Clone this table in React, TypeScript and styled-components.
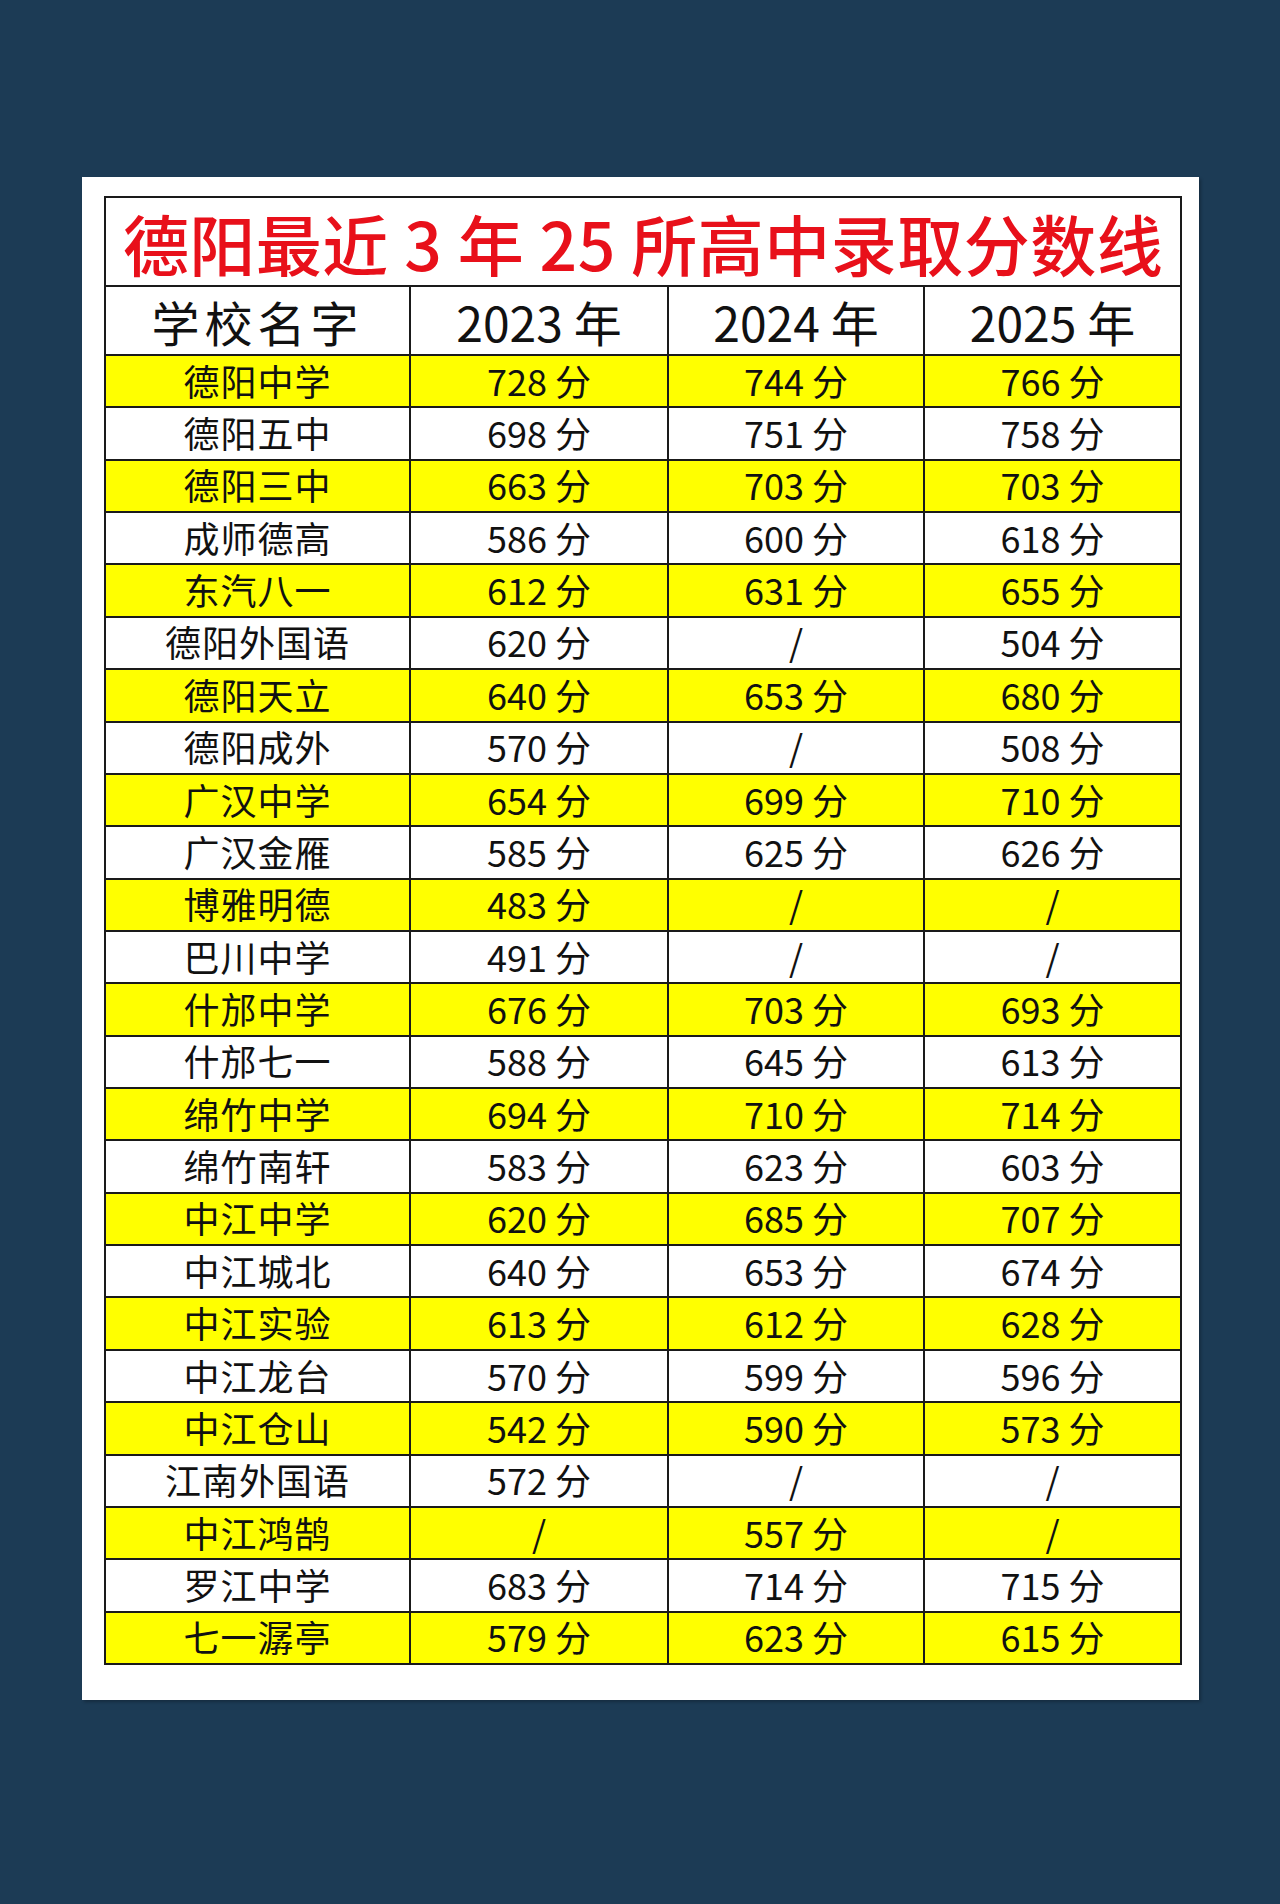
import React from 'react'
import styled, { createGlobalStyle } from 'styled-components'

const GlobalStyle = createGlobalStyle`
  html, body {
    margin: 0;
    padding: 0;
    background: #1c3b55;
  }
  body {
    font-family: "Noto Sans CJK SC", "Noto Sans", sans-serif;
  }
`

type Row = {name: string; y2023: string; y2024: string; y2025: string}

const rows: Row[] = [
  {name: '德阳中学', y2023: '728', y2024: '744', y2025: '766'},
  {name: '德阳五中', y2023: '698', y2024: '751', y2025: '758'},
  {name: '德阳三中', y2023: '663', y2024: '703', y2025: '703'},
  {name: '成师德高', y2023: '586', y2024: '600', y2025: '618'},
  {name: '东汽八一', y2023: '612', y2024: '631', y2025: '655'},
  {name: '德阳外国语', y2023: '620', y2024: '', y2025: '504'},
  {name: '德阳天立', y2023: '640', y2024: '653', y2025: '680'},
  {name: '德阳成外', y2023: '570', y2024: '', y2025: '508'},
  {name: '广汉中学', y2023: '654', y2024: '699', y2025: '710'},
  {name: '广汉金雁', y2023: '585', y2024: '625', y2025: '626'},
  {name: '博雅明德', y2023: '483', y2024: '', y2025: ''},
  {name: '巴川中学', y2023: '491', y2024: '', y2025: ''},
  {name: '什邡中学', y2023: '676', y2024: '703', y2025: '693'},
  {name: '什邡七一', y2023: '588', y2024: '645', y2025: '613'},
  {name: '绵竹中学', y2023: '694', y2024: '710', y2025: '714'},
  {name: '绵竹南轩', y2023: '583', y2024: '623', y2025: '603'},
  {name: '中江中学', y2023: '620', y2024: '685', y2025: '707'},
  {name: '中江城北', y2023: '640', y2024: '653', y2025: '674'},
  {name: '中江实验', y2023: '613', y2024: '612', y2025: '628'},
  {name: '中江龙台', y2023: '570', y2024: '599', y2025: '596'},
  {name: '中江仓山', y2023: '542', y2024: '590', y2025: '573'},
  {name: '江南外国语', y2023: '572', y2024: '', y2025: ''},
  {name: '中江鸿鹄', y2023: '', y2024: '557', y2025: ''},
  {name: '罗江中学', y2023: '683', y2024: '714', y2025: '715'},
  {name: '七一潺亭', y2023: '579', y2024: '623', y2025: '615'},
]

const score = (v: string) => (v ? `${v} 分` : '/')

export default function App() {
  return (
    <Page>
      <GlobalStyle />
      <Card>
        <Table>
          <colgroup>
            <col style={{width: 305}} />
            <col style={{width: 258}} />
            <col style={{width: 256}} />
            <col style={{width: 257}} />
          </colgroup>
          <thead>
            <TitleRow>
              <TitleCell colSpan={4}>德阳最近 3 年 25 所高中录取分数线</TitleCell>
            </TitleRow>
            <HeadRow>
              <HeadCell $wide>学校名字</HeadCell>
              <HeadCell>2023 年</HeadCell>
              <HeadCell>2024 年</HeadCell>
              <HeadCell>2025 年</HeadCell>
            </HeadRow>
          </thead>
          <tbody>
            {rows.map((r, i) => (
              <DataRow key={r.name} $highlight={i % 2 === 0}>
                <NameCell>{r.name}</NameCell>
                <ScoreCell>{score(r.y2023)}</ScoreCell>
                <ScoreCell>{score(r.y2024)}</ScoreCell>
                <ScoreCell>{score(r.y2025)}</ScoreCell>
              </DataRow>
            ))}
          </tbody>
        </Table>
      </Card>
    </Page>
  )
}

const Page = styled.div`
  width: 1280px;
  height: 1904px;
  box-sizing: border-box;
  padding: 177px 0 0 82px;
  background: #1c3b55;
`
const Card = styled.div`
  width: 1117px;
  box-sizing: border-box;
  background: #ffffff;
  padding: 19px 19px 35px 22px;
  box-shadow: 2px 2px 3px rgba(0, 0, 0, 0.25);
`
const Table = styled.table`
  width: 1076px;
  table-layout: fixed;
  border-collapse: collapse;
  border: 2px solid #1a1a1a;
  color: #111;
  td, th {
    border: 2px solid #1a1a1a;
    padding: 0;
    text-align: center;
    vertical-align: middle;
    white-space: nowrap;
  }
`
const TitleRow = styled.tr`
  height: 89px;
`
const TitleCell = styled.th`
  color: #e8101a;
  font-size: 66px;
  font-weight: 500;
  line-height: 80px;
  letter-spacing: 0.5px;
`
const HeadRow = styled.tr`
  height: 69px;
`
const HeadCell = styled.th<{$wide?: boolean}>`
  font-size: 48px;
  font-weight: 400;
  line-height: 60px;
  letter-spacing: ${p => (p.$wide ? '5px' : '0')};
`
const DataRow = styled.tr<{$highlight: boolean}>`
  height: 52.36px;
  background: ${p => (p.$highlight ? '#ffff00' : '#ffffff')};
`
const NameCell = styled.td`
  font-size: 36px;
  line-height: 40px;
  padding-bottom: 3px !important;
  letter-spacing: 1px;
`
const ScoreCell = styled.td`
  font-size: 36px;
  line-height: 40px;
  padding-bottom: 3px !important;
`
